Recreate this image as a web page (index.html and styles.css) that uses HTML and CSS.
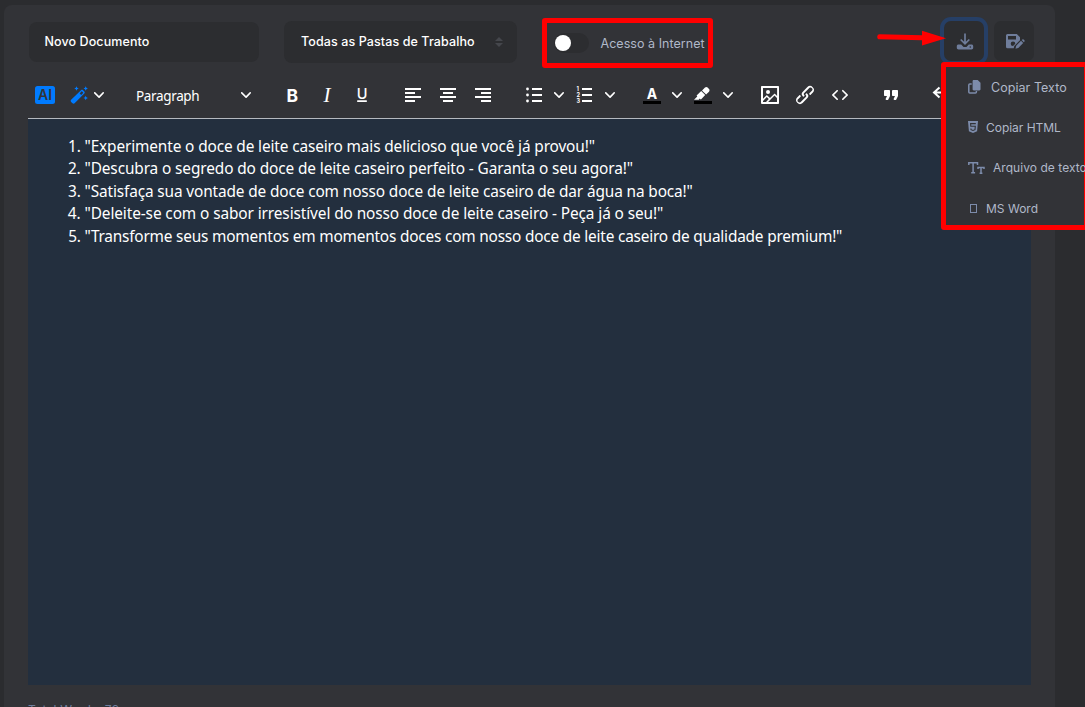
FILE: index.html
```html
<!DOCTYPE html>
<html lang="pt-BR">
<head>
<meta charset="utf-8">
<title>Novo Documento</title>
<link rel="stylesheet" href="styles.css">
</head>
<body>
<svg class="defs" width="0" height="0">
  <symbol id="chev" viewBox="0 0 10 10"><path d="M8.7 2.2c.3-.3.8-.3 1 0 .4.4.4.9 0 1.2L5.7 7.8c-.3.3-.9.3-1.2 0L.2 3.4a.8.8 0 0 1 0-1.2c.3-.3.8-.3 1.1 0L5 6l3.7-3.8z"/></symbol>
</svg>
<main class="panel">
  <header class="topbar">
    <div class="field name"><span class="t-name">Novo Documento</span></div>
    <div class="field folder"><span class="t-folder">Todas as Pastas de Trabalho</span>
      <svg class="sort" width="8" height="10" viewBox="0 0 8 10"><path d="M0 4 4 0l4 4zM0 6h8L4 10z"/></svg>
    </div>
    <div class="net mark"><span class="switch"><i class="knob"></i></span><span class="t-net">Acesso à Internet</span></div>
    <div class="actions">
      <div class="act focus"><svg width="18" height="18" viewBox="0 0 18 18"><path d="M9 1.500v10M4.700 7.500 9 11.800l4.300-4.300" fill="none" stroke="#6f7d9b" stroke-width="1.700"/><path d="M2.600 12.600h2.600L7.500 15h3l2.300-2.400h2.600c1.100 0 1.800.6 1.800 1.700v1.400c0 1-.7 1.700-1.800 1.700H2.600C1.500 17.400.8 16.700.8 15.700v-1.400c0-1.100.7-1.700 1.800-1.700z" fill="#6f7d9b"/><circle cx="14.300" cy="15" r=".8" fill="#2c2d31"/></svg></div>
      <div class="act"><svg width="20" height="18" viewBox="0 0 20 18"><path fill="#6f7d9b" fill-rule="evenodd" d="M2.500 2h9.300L15 5.200v3L9.300 14l-.6 2.300H2.500A1.500 1.500 0 0 1 1 14.800V3.500A1.500 1.500 0 0 1 2.500 2zM3 4v3.500h8V4zM8 9.500a2.300 2.300 0 1 0 0 4.600l2.300-2.300A2.300 2.300 0 0 0 8 9.500z"/><path fill="#6f7d9b" d="m16 8.800 2.200 2.200-4.900 4.900-2.800.8.700-2.900zM16.700 8.100l.8-.7c.9-.5 2.500.9 2 2l-.7.900z"/></svg></div>
    </div>
  </header>

  <div class="toolbar">
    <div class="group g-ai">
      <span class="btn"><svg width="20" height="18" viewBox="0 0 20 18"><rect width="20" height="18" rx="2.500" fill="#007bff"/><text x="3" y="14" class="ai">AI</text></svg></span>
      <span class="btn wand"><svg width="18" height="18" viewBox="0 0 18 18" fill="#007bff"><path fill-rule="evenodd" d="M11 4.200c.6-.6 1.500-.6 2.100 0l1.200 1.200c.6.6.6 1.500 0 2.100L4.600 17.200c-.6.6-1.500.6-2.100 0L1.100 15.900c-.6-.6-.6-1.500 0-2.100zM9.700 7.400l1.500 1.500 1.900-1.900c.3-.3-1.400-2-1.700-1.600z"/><path d="m6.500.3.7 1.500 1.500.7-1.500.7-.7 1.500-.7-1.500-1.500-.7 1.500-.7zM15.700.3l.7 1.500 1.500.7-1.500.7-.7 1.500-.7-1.500-1.500-.7 1.500-.7zM15.700 9.800l.7 1.500 1.500.7-1.500.7-.7 1.500-.7-1.500-1.500-.7 1.500-.7z"/></svg></span>
      <span class="ch wch"><svg width="10" height="10"><use href="#chev"/></svg></span>
    </div>
    <div class="group g-para"><span class="t-para">Paragraph</span><svg width="10" height="10"><use href="#chev"/></svg></div>
    <div class="group">
      <span class="btn"><svg class="i"><text x="12.300" y="18.500" class="b">B</text></svg></span>
      <span class="btn"><svg class="i"><text x="12" y="19" class="it">I</text></svg></span>
      <span class="btn"><svg class="i"><text x="12" y="16" class="u">U</text><rect x="7" y="17.300" width="10" height="1.700" rx=".8"/></svg></span>
    </div>
    <div class="group">
      <span class="btn"><svg class="i"><path d="M4 5h16v2H4zM4 9h10v2H4zM4 13h16v2H4zM4 17h10v2H4z"/></svg></span>
      <span class="btn"><svg class="i"><path d="M4 5h16v2H4zM7 9h10v2H7zM4 13h16v2H4zM7 17h10v2H7z"/></svg></span>
      <span class="btn"><svg class="i"><path d="M4 5h16v2H4zM10 9h10v2H10zM4 13h16v2H4zM10 17h10v2H10z"/></svg></span>
    </div>
    <div class="group">
      <span class="btn"><svg class="i"><path d="M10 5h10v2H10zM10 11h10v2H10zM10 17h10v2H10z"/><circle cx="5.500" cy="6" r="1.400"/><circle cx="5.500" cy="12" r="1.400"/><circle cx="5.500" cy="18" r="1.400"/></svg></span>
      <span class="ch"><svg width="10" height="10"><use href="#chev"/></svg></span>
      <span class="btn"><svg class="i"><path d="M9 5h10v2H9zM9 11h10v2H9zM9 17h10v2H9z"/><g class="num"><text x="3.500" y="8">1</text><text x="3.500" y="14">2</text><text x="3.500" y="20">3</text></g></svg></span>
      <span class="ch"><svg width="10" height="10"><use href="#chev"/></svg></span>
    </div>
    <div class="group">
      <span class="btn"><svg class="i"><path fill="#000" d="M3 18h18v3H3z"/><text x="12" y="16" class="a">A</text></svg></span>
      <span class="ch"><svg width="10" height="10"><use href="#chev"/></svg></span>
      <span class="btn"><svg class="i"><path fill="#000" d="M3 18h18v3H3z"/><path d="M7.700 16.700H3l3.300-3.300-.7-.8L10.200 8l4 4.100-4 4.200c-.2.200-.6.200-.8 0l-.6-.7-1.100 1.100zm5-7.500L11 7.400l3-2.900a2 2 0 0 1 2.600 0L18 6c.7.700.7 2 0 2.700l-2.900 2.900-1.800-1.800-.5-.6"/></svg></span>
      <span class="ch"><svg width="10" height="10"><use href="#chev"/></svg></span>
    </div>
    <div class="group">
      <span class="btn"><svg class="i"><path fill-rule="evenodd" d="m5 15.700 3.300-3.200c.3-.3.7-.3 1 0L12 15l4.100-4c.3-.4.8-.4 1 0l2 1.900V5H5v10.700zM5 18V19h3l2.800-2.900-2-2L5 17.900zm14-3-2.500-2.400-6.400 6.500H19v-4zM4 3h16c.6 0 1 .4 1 1v16c0 .6-.4 1-1 1H4a1 1 0 0 1-1-1V4c0-.6.4-1 1-1zm6 8a2 2 0 1 0 0-4 2 2 0 0 0 0 4z"/></svg></span>
      <span class="btn"><svg class="i"><path d="M6.200 12.300a1 1 0 0 1 1.400 1.400l-2 2a2 2 0 1 0 2.600 2.800l4.800-4.800a1 1 0 0 0 0-1.400 1 1 0 1 1 1.400-1.300 2.900 2.900 0 0 1 0 4L9.600 20a3.900 3.900 0 0 1-5.500-5.500l2-2zm11.600-.6a1 1 0 0 1-1.400-1.400l2-2a2 2 0 1 0-2.600-2.800L11 10.300a1 1 0 0 0 0 1.400A1 1 0 1 1 9.600 13a2.900 2.900 0 0 1 0-4L14.400 4a3.900 3.900 0 0 1 5.500 5.500l-2 2z"/></svg></span>
      <span class="btn"><svg class="i"><path d="M9.800 15.700c.3.300.3.800 0 1-.3.400-.9.400-1.200 0l-4.400-4.100a.8.800 0 0 1 0-1.200l4.400-4.200c.3-.3.900-.3 1.200 0 .3.300.3.800 0 1.100L6 12l3.800 3.700zM14.200 15.700c-.3.300-.3.800 0 1 .4.400.9.400 1.200 0l4.400-4.100c.3-.3.300-.8 0-1.200l-4.400-4.200a.8.800 0 0 0-1.200 0c-.3.300-.3.800 0 1.100L18 12l-3.800 3.700z"/></svg></span>
    </div>
    <div class="group">
      <span class="btn"><svg class="i"><path d="M7.500 17h.9c.4 0 .7-.2.900-.6L11 13V8c0-.6-.4-1-1-1H6a1 1 0 0 0-1 1v4c0 .6.400 1 1 1h2l-1.300 2.700a1 1 0 0 0 .8 1.300zm8 0h.9c.4 0 .7-.2.900-.6L19 13V8c0-.6-.4-1-1-1h-4a1 1 0 0 0-1 1v4c0 .6.400 1 1 1h2l-1.300 2.700a1 1 0 0 0 .8 1.300z"/></svg></span>
    </div>
    <div class="group">
      <span class="btn"><svg class="i"><path d="M9.500 4.500 4 9.500l5.500 5M4.500 9.500H14a5 5 0 0 1 0 9" fill="none" stroke="#fff" stroke-width="2"/></svg></span>
    </div>
  </div>

  <article class="editor">
    <ol>
      <li>"Experimente o doce de leite caseiro mais delicioso que você já provou!"</li>
      <li class="l2">"Descubra o segredo do doce de leite caseiro perfeito - Garanta o seu agora!"</li>
      <li>"Satisfaça sua vontade de doce com nosso doce de leite caseiro de dar água na boca!"</li>
      <li class="l4">"Deleite-se com o sabor irresistível do nosso doce de leite caseiro - Peça já o seu!"</li>
      <li class="l5">"Transforme seus momentos em momentos doces com nosso doce de leite caseiro de qualidade premium!"</li>
    </ol>
  </article>
  <footer class="count">Total Words: 79</footer>
</main>

<nav class="menu">
  <div class="item"><svg width="13" height="14" viewBox="0 0 13 14"><path d="M5.800 0h3.900L12.500 2.800v6.500c0 .7-.5 1.200-1.200 1.200H5.800c-.7 0-1.200-.5-1.200-1.200v-8C4.600.5 5.100 0 5.800 0z"/><path d="M3.700 4H1.800C1.200 4 .8 4.400.8 5v7c0 .6.400 1 1 1h5.600c.6 0 1-.4 1-1v-1" fill="none" stroke="#7d8cab" stroke-width="1.500"/></svg><span class="m1">Copiar Texto</span></div>
  <div class="item"><svg width="10" height="12" viewBox="0 0 10 12"><path d="M0 0h10l-.9 10.200L5 12 .9 10.200z"/><path d="M7.800 2.600H2.600l.2 2.700h4.500l-.3 3.400-2 .7-2-.7-.1-1.200" fill="none" stroke="#323337" stroke-width="1.100"/></svg><span class="m2">Copiar HTML</span></div>
  <div class="item"><svg width="17" height="14" viewBox="0 0 17 14"><path d="M.8 4V1.800h8.700V4M5.100 2v9.800M3.200 11.700h3.900M10 8V6.600h6V8M13 6.700v5.500M11.600 12.200h2.800" fill="none" stroke="#7d8cab" stroke-width="1.500"/></svg><span class="m3">Arquivo de texto</span></div>
  <div class="item"><i class="missing"></i><span class="m4">MS Word</span></div>
</nav>
<svg class="arrow" width="70" height="16" viewBox="0 0 70 16"><path d="M2.700 6.800 45 7.800" fill="none" stroke="#f00" stroke-width="5" stroke-linecap="round"/><path d="M45 .8 69 8.200 45 15.500z" fill="#f00"/></svg>
</body>
</html>
```
FILE: styles.css
```css
* { box-sizing: border-box; }
html, body { height: 100%; }
body {
  margin: 0; padding: 5px 0 0 4px; overflow: hidden; position: relative;
  background: #2b2c2f; color: #fff;
  font-family: Inter, "Noto Sans", sans-serif; font-size: 12px;
}
.defs { position: absolute; }
svg { display: block; flex: none; }
span { white-space: nowrap; }
.panel {
  width: 1051px; height: 720px; padding: 13px 24px 0;
  border-radius: 8px 8px 0 0; background: #323337;
}
.topbar { display: flex; align-items: flex-start; height: 50px; }
.topbar > div { flex: none; }
.field {
  display: flex; align-items: center; border-radius: 8px; background: #2c2d30;
  font-weight: 500; font-size: 12.500px; letter-spacing: .1px;
}
.field span { margin-top: -1px; }
.name { width: 230px; height: 40px; margin: 4px 0 0 1px; padding-left: 15.500px; }
.folder { width: 233px; height: 42px; margin: 3px 0 0 25px; padding: 0 14px 0 17px; justify-content: space-between; }
.sort { fill: #45474c; }
.mark { border: 5px solid #f00; border-radius: 3px; }
.net { display: flex; align-items: center; width: 171px; height: 50px; margin-left: 25px; padding-left: 7px; color: #b0b8c9; font-size: 12.500px; letter-spacing: .04px; }
.switch { display: flex; align-items: center; width: 35px; height: 20px; padding-left: 1px; border-radius: 10px; background: #2c2d30; margin-right: 11.500px; }
.knob { width: 16px; height: 16px; border-radius: 50%; background: #fff; }
.actions { display: flex; gap: 10px; margin: 3px 0 0 231px; }
.act { display: flex; align-items: center; justify-content: center; width: 40px; height: 40px; border-radius: 7px; background: #2c2d30; }
.act svg { margin-left: 1px; }
.focus { box-shadow: 0 0 0 4px #263f66; }

.toolbar { display: flex; gap: 16px; height: 50px; padding-top: 3px; align-items: center; margin-left: -.5px; fill: #fff; }
.group { display: flex; align-items: center; height: 24px; flex: none; }
.btn { display: flex; justify-content: center; width: 35px; }
.ch { display: flex; justify-content: center; width: 16px; padding-right: 1px; }
.i { width: 24px; height: 24px; }
.g-ai { width: 81px; }
.wand { width: 32px; }
.wch { width: 8px; padding: 0; }
.g-para { width: 134px; padding: 0 8px 0 11.500px; justify-content: space-between; }
.t-para { font: 13.500px/24px "Noto Sans", sans-serif; letter-spacing: -.35px; padding-top: 2px; }
.ai { font: 600 14px Inter, sans-serif; fill: #323337; }
.b { font: 700 17.500px Inter, sans-serif; text-anchor: middle; }
.it { font: italic 21px "Liberation Serif", serif; text-anchor: middle; }
.u { font: 500 14.500px Inter, sans-serif; text-anchor: middle; }
.a { font: 700 14px Inter, sans-serif; text-anchor: middle; }
.num { font: 700 5.500px Inter, sans-serif; }

.editor {
  height: 567px; margin: 0; width: 1003px; padding-top: 16.600px;
  border-top: 1px solid #b5b9bf; background: #232f3e;
  font: 15.400px/22.500px "Noto Sans", sans-serif; letter-spacing: -.13px;
}
.editor ol { margin: 0; padding-left: 56.500px; }
.editor li { white-space: nowrap; }
.editor .l2 { letter-spacing: -.11px; }
.editor .l4 { letter-spacing: -.1px; }
.editor .l5 { letter-spacing: -.2px; }
.count { padding-top: 16px; font: 12px/18px Inter, sans-serif; letter-spacing: .2px; color: #6f7d9b; }

.menu {
  position: absolute; left: 941px; top: 62px; width: 148px; height: 168px;
  padding-left: 22px; border: 5px solid #f00; border-radius: 3px;
  background: #323337; color: #b0b8c9; fill: #7d8cab;
}
.item { display: flex; align-items: center; height: 40.300px; gap: 8px; }
.m1 { margin-left: 2px; font-size: 12.500px; letter-spacing: .05px; }
.m2 { letter-spacing: -.03px; }
.m3 { letter-spacing: .05px; }
.missing { width: 7px; height: 9px; margin: 0 1px 0 2px; border: 1px solid #7d8cab; }
.arrow { position: absolute; left: 877px; top: 30px; }
```
